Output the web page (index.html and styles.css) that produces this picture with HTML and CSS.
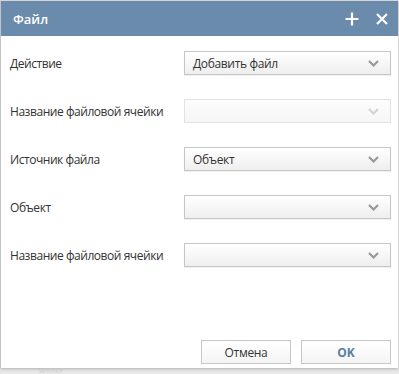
FILE: index.html
```html
<!DOCTYPE html>
<html>
<head><meta charset="utf-8"/>
<title>Файл</title>
<link rel="stylesheet" href="styles.css">
</head>
<body>
<div class="dialog">
  <div class="dialog-header">
    <span class="dialog-title">Файл</span>
    <div class="header-tools">
      <svg class="tool" width="14" height="14" viewBox="0 0 14 14"><path d="M7 0.5V13.5M0.5 7H13.5" stroke="#fff" stroke-width="2.2" fill="none"/></svg>
      <svg class="tool" width="12" height="12" viewBox="0 0 12 12"><path d="M1 1L11 11M11 1L1 11" stroke="#fff" stroke-width="2.2" fill="none"/></svg>
    </div>
  </div>
  <div class="dialog-body">
    <label class="field-label">Действие</label>
    <div class="select"><span>Добавить файл</span><svg class="chevron" width="11" height="7" viewBox="0 0 11 7"><polyline points="1,1 5.5,5.5 10,1" /></svg></div>

    <label class="field-label">Название файловой ячейки</label>
    <div class="select disabled"><span></span><svg class="chevron" width="11" height="7" viewBox="0 0 11 7"><polyline points="1,1 5.5,5.5 10,1" /></svg></div>

    <label class="field-label">Источник файла</label>
    <div class="select"><span>Объект</span><svg class="chevron" width="11" height="7" viewBox="0 0 11 7"><polyline points="1,1 5.5,5.5 10,1" /></svg></div>

    <label class="field-label">Объект</label>
    <div class="select"><span></span><svg class="chevron" width="11" height="7" viewBox="0 0 11 7"><polyline points="1,1 5.5,5.5 10,1" /></svg></div>

    <label class="field-label">Название файловой ячейки</label>
    <div class="select"><span></span><svg class="chevron" width="11" height="7" viewBox="0 0 11 7"><polyline points="1,1 5.5,5.5 10,1" /></svg></div>
  </div>
  <div class="dialog-footer">
    <button class="btn">Отмена</button>
    <button class="btn btn-primary">OK</button>
  </div>
</div>
<div class="under">ЗАГРУЗКИ</div>
</body>
</html>
```

FILE: styles.css
```css
body { margin: 0; background: #e9e9e9; font-family: "Open Sans", "Noto Sans", sans-serif; overflow: hidden; }

.dialog {
    height: 368px;
    width: 398px;
    display: flex;
    flex-direction: column;
    background: #fff;
    border-top: 1px solid #d6d6d6;
    border-left: 1px solid #c4c4c4;
    box-sizing: border-box;
    box-shadow: 0 1px 3px rgba(0,0,0,0.25);
}

.dialog-header {
    height: 35px;
    flex: none;
    background: #6a8bab;
    display: flex;
    align-items: center;
    padding: 0 10px 0 12px;
}

.dialog-title {
    color: #fff;
    font-size: 13px;
    font-weight: 600;
    flex: 1;
}

.header-tools { display: flex; align-items: center; gap: 17px; }
.tool { display: block; }

.dialog-body {
    flex: 1;
    display: grid;
    grid-template-columns: 174px 207px;
    grid-auto-rows: 24px;
    row-gap: 24px;
    align-items: center;
    padding: 15px 0 0 9px;
}

.field-label {
    font-size: 12px;
    letter-spacing: -0.45px;
    color: #333;
}

.select {
    height: 24px;
    box-sizing: border-box;
    border: 1px solid #c6c6c6;
    background: linear-gradient(#ffffff, #eeeeee);
    box-shadow: 0 1px 1px rgba(0,0,0,0.06);
    display: flex;
    align-items: center;
    padding: 0 11px 0 8px;
    font-size: 12px;
    letter-spacing: -0.35px;
    color: #333;
}

.select span { flex: 1; }

.chevron polyline { fill: none; stroke: #9a9a9a; stroke-width: 2.2; }

.select.disabled { border-color: #e2e2e2; background: linear-gradient(#fdfdfd, #f6f6f6); box-shadow: none; }
.select.disabled .chevron polyline { stroke: #d4d4d4; }

.dialog-footer {
    display: flex;
    justify-content: flex-end;
    gap: 10px;
    padding: 0 7px 4px 0;
}

.btn {
    width: 90px;
    height: 24px;
    border: 1px solid #c6c6c6;
    background: linear-gradient(#ffffff, #f4f4f4);
    font-family: "Open Sans", "Noto Sans", sans-serif;
    font-size: 12px;
    letter-spacing: -0.3px;
    color: #333;
    padding: 0;
}

.btn-primary { color: #5a7ea4; font-weight: 700; letter-spacing: 0; }

.under {
    font-size: 5px;
    line-height: 6px;
    color: #c8c8c8;
    padding-left: 38px;
}
```
